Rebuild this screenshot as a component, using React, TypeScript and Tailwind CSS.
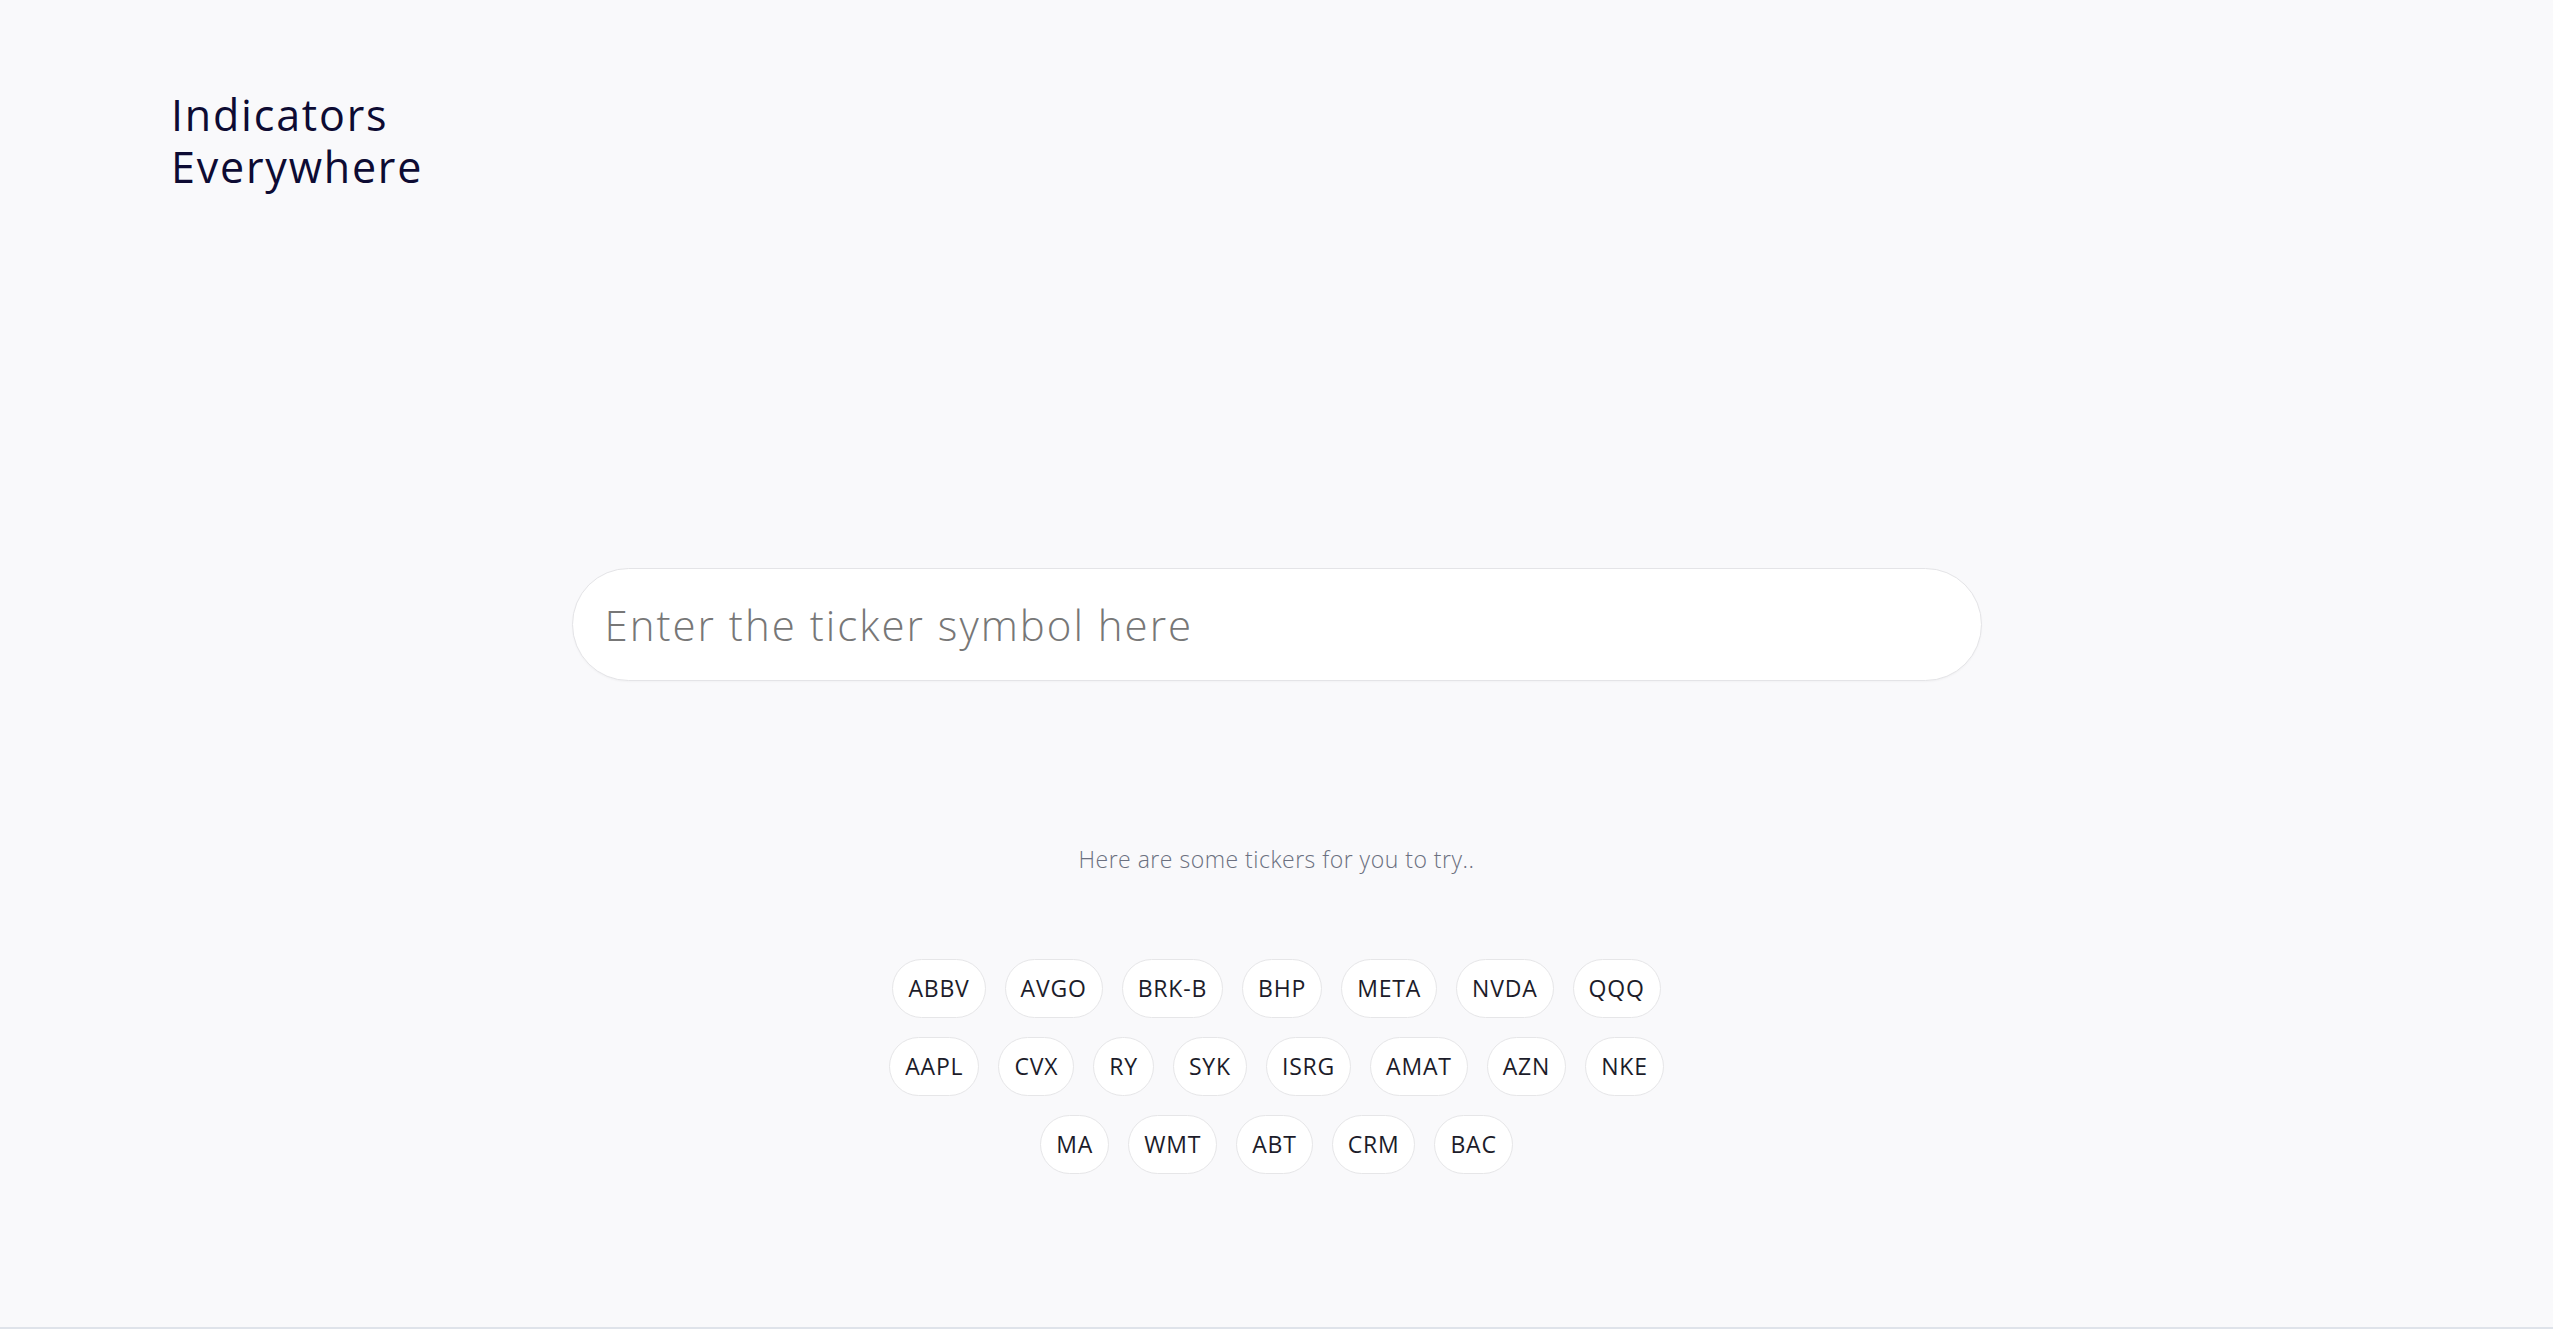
const rows = [
  ["ABBV", "AVGO", "BRK-B", "BHP", "META", "NVDA", "QQQ"],
  ["AAPL", "CVX", "RY", "SYK", "ISRG", "AMAT", "AZN", "NKE"],
  ["MA", "WMT", "ABT", "CRM", "BAC"],
];

export default function App() {
  return (
    <div
      className="min-h-screen bg-[#f9f9fb] border-b-2 border-[#dfe3ea]"
      style={{ fontFamily: '"Open Sans", "Noto Sans", sans-serif' }}
    >
      {/* header */}
      <header className="pl-[171px] pt-[89px]">
        <h1 className="text-[43px] leading-[52px] font-medium tracking-[1.8px] text-[#0d0b33]">
          <span className="block">Indicators</span>
          <span className="block">Everywhere</span>
        </h1>
      </header>

      <main className="flex flex-col items-center">
        {/* search */}
        <div className="mt-[375px] w-[1410px]">
          <input
            type="text"
            placeholder="Enter the ticker symbol here"
            className="w-full h-[113px] rounded-full border border-[#e4e4e7] bg-white px-[32px] text-[42px] font-light tracking-[2px] text-[#333] placeholder:text-[#777] outline-none shadow-[0_1px_2px_rgba(0,0,0,0.03)]"
          />
        </div>

        <p className="mt-[162px] text-[23px] leading-[32px] font-light tracking-[0.5px] text-[#6b7080]">
          Here are some tickers for you to try..
        </p>

        {/* tickers */}
        <div className="mt-[84px] flex flex-col items-center gap-[19px]">
          {rows.map((row, i) => (
            <div key={i} className="flex gap-[19px]">
              {row.map((t) => (
                <button
                  key={t}
                  className="h-[59px] px-[15px] rounded-full border border-[#e6e6e8] bg-white text-[23px] tracking-[0.8px] text-[#1c1c2a]"
                >
                  {t}
                </button>
              ))}
            </div>
          ))}
        </div>
      </main>
    </div>
  );
}
